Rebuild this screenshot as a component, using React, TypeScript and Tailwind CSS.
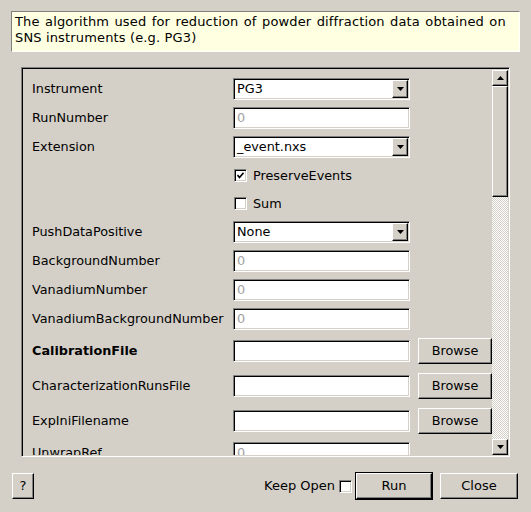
import React from "react";

const sunken =
  "border border-t-[#808080] border-l-[#808080] border-r-white border-b-white shadow-[inset_1px_1px_0_#000,inset_-1px_-1px_0_#d4d0c8]";
const raised =
  "border border-t-white border-l-white border-r-black border-b-black shadow-[inset_-1px_-1px_0_#808080]";

const font = "font-['DejaVu_Sans',sans-serif]";

function DownTri() {
  return (
    <svg width="7" height="4" viewBox="0 0 7 4">
      <polygon points="0,0 7,0 3.5,4" fill="#000" />
    </svg>
  );
}
function UpTri() {
  return (
    <svg width="7" height="4" viewBox="0 0 7 4">
      <polygon points="0,4 7,4 3.5,0" fill="#000" />
    </svg>
  );
}

function Combo({ value }: { value: string }) {
  return (
    <div className={`${sunken} w-[177px] h-[22px] bg-white flex items-center relative`}>
      <span className="pl-[3px] text-black">{value}</span>
      <div
        className={`${raised} absolute right-[1px] top-[1px] w-[16px] h-[18px] bg-[#d4d0c8] flex items-center justify-center`}
      >
        <DownTri />
      </div>
    </div>
  );
}

function TextInput({ placeholder = "" }: { placeholder?: string }) {
  return (
    <div className={`${sunken} w-[177px] h-[22px] bg-white flex items-center`}>
      <span className="pl-[3px] text-[#a0a0a0]">{placeholder}</span>
    </div>
  );
}

function CheckBox({ checked }: { checked?: boolean }) {
  return (
    <div className={`${sunken} w-[13px] h-[13px] bg-white flex items-center justify-center`}>
      {checked && (
        <svg width="7" height="7" viewBox="0 0 7 7">
          <path d="M0.5 3 L2.5 5.5 L6.5 0.8" stroke="#000" strokeWidth="1.6" fill="none" />
        </svg>
      )}
    </div>
  );
}

function Button({ label, cls }: { label: string; cls: string }) {
  return (
    <div className={`${raised} ${cls} bg-[#d4d0c8] flex items-center justify-center text-black`}>
      {label}
    </div>
  );
}

type Row =
  | { kind: "combo"; label: string; value: string }
  | { kind: "input"; label: string; placeholder?: string }
  | { kind: "check"; label: string; checked: boolean }
  | { kind: "file"; label: string; bold?: boolean };

const rows: Row[] = [
  { kind: "combo", label: "Instrument", value: "PG3" },
  { kind: "input", label: "RunNumber", placeholder: "0" },
  { kind: "combo", label: "Extension", value: "_event.nxs" },
  { kind: "check", label: "PreserveEvents", checked: true },
  { kind: "check", label: "Sum", checked: false },
  { kind: "combo", label: "PushDataPositive", value: "None" },
  { kind: "input", label: "BackgroundNumber", placeholder: "0" },
  { kind: "input", label: "VanadiumNumber", placeholder: "0" },
  { kind: "input", label: "VanadiumBackgroundNumber", placeholder: "0" },
  { kind: "file", label: "CalibrationFile", bold: true },
  { kind: "file", label: "CharacterizationRunsFile" },
  { kind: "file", label: "ExpIniFilename" },
  { kind: "input", label: "UnwrapRef", placeholder: "0" },
  { kind: "input", label: "LowResRef", placeholder: "0" },
  { kind: "input", label: "CropWavelengthMin", placeholder: "0" },
];

function RowView({ row }: { row: Row }) {
  if (row.kind === "check") {
    return (
      <div className="flex items-center h-[21px]">
        <div className="w-[201px]" />
        <div className="flex items-center gap-[6px] pl-[1px]">
          <CheckBox checked={row.checked} />
          <span>{row.label}</span>
        </div>
      </div>
    );
  }
  if (row.kind === "file") {
    return (
      <div className="flex items-center h-[28px]">
        <div className={`w-[201px] whitespace-nowrap ${row.bold ? "font-bold" : ""}`}>{row.label}</div>
        <TextInput />
        <div className="w-[8px]" />
        <Button label="Browse" cls="w-[74px] h-[26px]" />
      </div>
    );
  }
  return (
    <div className="flex items-center h-[22px]">
      <div className="w-[201px] whitespace-nowrap">{row.label}</div>
      {row.kind === "combo" ? <Combo value={row.value} /> : <TextInput placeholder={row.placeholder} />}
    </div>
  );
}

export default function App() {
  return (
    <div
      className={`${font} w-[531px] h-[512px] bg-[#d4d0c8] flex flex-col px-[11px] pt-[11px] text-[12.8px] text-black overflow-hidden`}
    >
      <div className="h-[41px] bg-[#ffffe1] border border-t-[#808080] border-l-[#808080] border-r-white border-b-white px-[3px] pt-[2px] leading-[16px] text-[13px] tracking-[0.15px] whitespace-nowrap">
        <span className="[word-spacing:1.1px]">
          The algorithm used for reduction of powder diffraction data obtained on
        </span>
        <br />
        SNS instruments (e.g. PG3)
      </div>

      <div className={`mt-[15px] mx-[10px] h-[390px] ${sunken} flex p-[1px]`}>
        <div className="flex-1 overflow-hidden pl-[9px] pt-[9px]">
          <div className="flex flex-col gap-[7px]">
            {rows.map((r) => (
              <RowView key={r.label} row={r} />
            ))}
          </div>
        </div>
        <div className="w-[16px] flex flex-col pt-[1px]">
          <div className={`${raised} h-[16px] bg-[#d4d0c8] flex items-center justify-center`}>
            <UpTri />
          </div>
          <div className={`${raised} h-[111px] bg-[#d4d0c8]`} />
          <div className="flex-1 bg-[repeating-conic-gradient(#d4d0c8_0%_25%,#ffffff_0%_50%)] bg-[length:2px_2px]" />
          <div className={`${raised} h-[16px] bg-[#d4d0c8] flex items-center justify-center`}>
            <DownTri />
          </div>
        </div>
      </div>

      <div className="mt-[15px] flex items-center h-[28px] text-[13px]">
        <Button label="?" cls="w-[22px] h-[26px] ml-[1px]" />
        <div className="flex-1" />
        <span>Keep Open</span>
        <div className="ml-[4px]">
          <CheckBox />
        </div>
        <div className="ml-[3px] border border-black">
          <Button label="Run" cls="w-[76px] h-[26px]" />
        </div>
        <div className="ml-[7px] mr-[2px]">
          <Button label="Close" cls="w-[78px] h-[26px]" />
        </div>
      </div>
    </div>
  );
}
